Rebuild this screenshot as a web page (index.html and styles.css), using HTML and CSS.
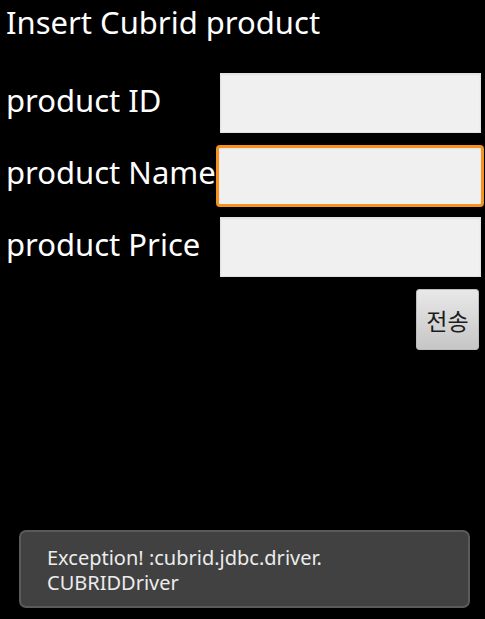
FILE: index.html
```html
<!DOCTYPE html>
<html lang="en">
<head>
  <meta charset="UTF-8" />
  <meta name="viewport" content="width=device-width, initial-scale=1.0"/>
  <title>Insert Cubrid product</title>
  <link rel="stylesheet" href="styles.css">
</head>
<body>
  <h1 class="title">Insert Cubrid product</h1>

  <form class="product-form" id="productForm">
    <label class="field-label" for="productId">product ID</label>
    <div class="field"><input class="field-input" id="productId" name="productId" type="text"></div>

    <label class="field-label" for="productName">product Name</label>
    <div class="field field-focused"><input class="field-input" id="productName" name="productName" type="text"></div>

    <label class="field-label" for="productPrice">product Price</label>
    <div class="field"><input class="field-input" id="productPrice" name="productPrice" type="text"></div>

    <div class="actions">
      <button class="send-button" type="submit">전송</button>
    </div>
  </form>

  <div class="toast">Exception! :cubrid.jdbc.driver.<br>CUBRIDDriver</div>
</body>
</html>
```

FILE: styles.css
```css
html, body {
  height: 100%;
}
body {
  margin: 0;
  background-color: #000000;
  color: #ffffff;
  font-family: 'Noto Sans', 'Open Sans', sans-serif;
  position: relative;
  overflow: hidden;
}
.title {
  margin: 0 0 25px 0;
  padding: 2px 0 0 6px;
  font-size: 31px;
  font-weight: normal;
  line-height: 40px;
}
.product-form {
  display: grid;
  grid-template-columns: auto minmax(0, 1fr);
  grid-auto-rows: 72px;
}
.field-label {
  display: flex;
  align-items: center;
  padding-left: 6px;
  padding-bottom: 5px;
  font-size: 31px;
  line-height: 1;
  white-space: nowrap;
}
.field {
  display: flex;
  min-width: 0;
  margin: 6px 4px 6px 4px;
  background-color: #f0f0f0;
  border: 1px solid #e2e2e2;
  box-shadow: inset 0 1px 2px rgba(0, 0, 0, 0.06);
}
.field-focused {
  margin: 6px 1px 4px 0;
  border: 3px solid #f7921e;
  border-radius: 4px;
}
.field-input {
  flex: 1;
  width: 0;
  min-width: 0;
  border: none;
  background: transparent;
  outline: none;
  font-size: 21px;
  font-family: inherit;
}
.actions {
  grid-column: 1 / span 2;
  display: flex;
  justify-content: flex-end;
  align-items: flex-start;
  padding: 6px 6px 0 0;
}
.send-button {
  width: 63px;
  height: 61px;
  padding: 0;
  border: 1px solid #bcbcbc;
  border-radius: 3px;
  background: linear-gradient(to bottom, #e8e8e8, #c6c6c6);
  color: #1c1c1c;
  font-family: 'Noto Sans CJK KR', sans-serif;
  font-size: 23px;
  cursor: pointer;
}
.toast {
  position: absolute;
  left: 19px;
  bottom: 11px;
  width: 451px;
  height: 78px;
  box-sizing: border-box;
  padding: 13px 26px;
  background-color: #414141;
  border: 2px solid #5a5a5a;
  border-radius: 7px;
  color: #ececec;
  font-size: 20px;
  line-height: 25px;
}
```
